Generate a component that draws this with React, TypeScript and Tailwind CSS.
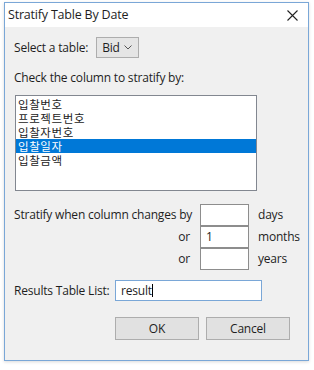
import React from "react";

const font = { fontFamily: '"Open Sans", "Noto Sans", "Noto Sans CJK KR", sans-serif' };

export default function App() {
  const items = ["입찰번호", "프로젝트번호", "입찰자번호", "입찰일자", "입찰금액"];
  return (
    <div className="w-[314px] h-[370px] bg-white pt-[2px] pl-[4px] text-[#1e1e1e]" style={font}>
      <div className="w-[305px] h-[359px] border border-[#7aa7d7] flex flex-col shadow-[0_1px_3px_rgba(0,0,0,0.15)]">
        <div className="h-[24px] bg-white flex items-center justify-between pl-[3px] pr-[10px] text-[12.5px] tracking-[-0.2px]">
          <span>Stratify Table By Date</span>
          <svg width="11" height="11" viewBox="0 0 11 11">
            <path d="M0.5 0.5 L10.5 10.5 M10.5 0.5 L0.5 10.5" stroke="#222" strokeWidth="1.1" />
          </svg>
        </div>
        <div className="flex-1 bg-[#f0f0f0] pl-[9px] flex flex-col text-[12px] tracking-[-0.2px] whitespace-nowrap">
          <div className="mt-[10px] h-[21px] flex items-center">
            <span>Select a table:</span>
            <div className="ml-[8px] w-[43px] h-[21px] border border-[#adadad] bg-[#e5e5e5] flex items-center justify-between pl-[5px] pr-[6px]">
              <span>Bid</span>
              <svg width="8" height="5" viewBox="0 0 8 5">
                <path d="M0.5 0.5 L4 4 L7.5 0.5" stroke="#555" strokeWidth="1" fill="none" />
              </svg>
            </div>
          </div>
          <div className="mt-[12px] h-[16px] leading-[16px]">Check the column to stratify by:</div>
          <div className="mt-[9px] ml-px w-[242px] h-[96px] border border-[#828790] bg-white py-[1px] flex flex-col">
            {items.map((it, i) => (
              <div
                key={it}
                className={
                  "h-[14px] leading-[14px] pl-[2px] text-[11.5px] tracking-[0.6px] overflow-hidden " +
                  (i === 3 ? "bg-[#0078d7] text-white" : "text-[#222]")
                }
                style={{ fontFamily: '"Noto Sans CJK KR", sans-serif' }}
              >
                {it}
              </div>
            ))}
          </div>
          <div className="mt-[13px] flex flex-col gap-[1px]">
            {[
              ["Stratify when column changes by", "", "days"],
              ["or", "1", "months"],
              ["or", "", "years"],
            ].map(([l, v, u], i) => (
              <div key={i} className="flex items-center h-[21px]">
                <div className="w-[186px] text-right pr-[10px]">
                  <span className={i === 0 ? "block text-left" : ""}>{l}</span>
                </div>
                <div className="w-[49px] h-[22px] border border-[#8d8d8d] bg-white pl-[5px] flex items-center">{v}</div>
                <span className="ml-[9px]">{u}</span>
              </div>
            ))}
          </div>
          <div className="mt-[11px] h-[21px] flex items-center">
            <span className="w-[101px]">Results Table List:</span>
            <div className="w-[147px] h-[21px] border border-[#7aa7d7] bg-white flex items-center pl-[5px]">
              <span>result</span>
              <span className="w-px h-[13px] bg-black"></span>
            </div>
          </div>
          <div className="mt-[16px] flex pl-[101px] gap-[7px]">
            <div className="w-[84px] h-[23px] border border-[#adadad] bg-[#e1e1e1] flex items-center justify-center">OK</div>
            <div className="w-[84px] h-[23px] border border-[#adadad] bg-[#e1e1e1] flex items-center justify-center">Cancel</div>
          </div>
        </div>
      </div>
    </div>
  );
}
